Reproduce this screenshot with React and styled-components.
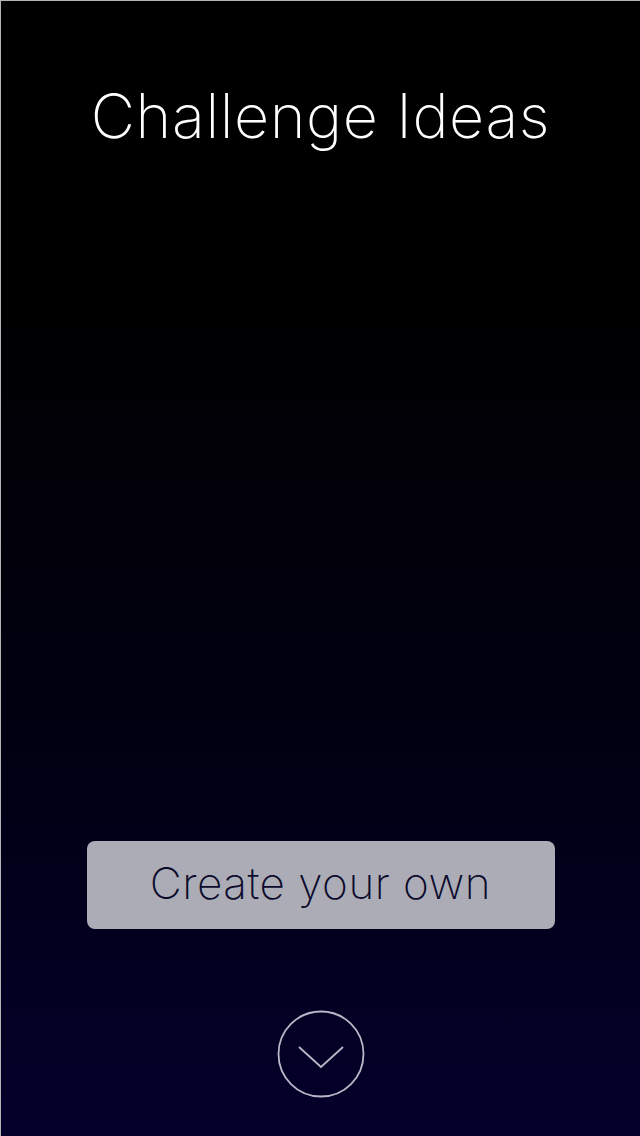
import React from "react";
import styled, { createGlobalStyle } from "styled-components";

const Global = createGlobalStyle`
  html, body {
    margin: 0;
    padding: 0;
    background: #000;
  }
`;

const Screen = styled.div`
  box-sizing: border-box;
  width: 640px;
  height: 1136px;
  border-top: solid 1px #b4b4b4;
  border-left: solid 1px #b4b4b4;
  background: linear-gradient(180deg, #000000 0%, #000000 25%, #010012 65%, #03002b 100%);
  display: flex;
  flex-direction: column;
  align-items: center;
  font-family: Inter, "Open Sans", sans-serif;
`;

const Title = styled.h1`
  margin: 77px 0 0;
  font-size: 61px;
  font-weight: 200;
  color: #ffffff;
  letter-spacing: 0.6px;
  line-height: 76px;
`;

const Spacer = styled.div`
  flex: 1;
`;

const Button = styled.button`
  width: 468px;
  height: 88px;
  border: none;
  border-radius: 8px;
  background: #abacb6;
  color: #0b0a2c;
  font-family: inherit;
  font-size: 44px;
  font-weight: 200;
  letter-spacing: 0.5px;
  display: flex;
  align-items: center;
  justify-content: center;
  padding: 0 0 4px;
`;

const Chevron = styled.div`
  margin: 81px 0 38px;
  width: 88px;
  height: 88px;
`;

export default function App() {
  return (
    <>
      <Global />
      <Screen>
        <Title>Challenge Ideas</Title>
        <Spacer />
        <Button>Create your own</Button>
        <Chevron>
          <svg width="88" height="88" viewBox="0 0 88 88" fill="none">
            <circle cx="44" cy="44" r="42.5" stroke="#b8b8c8" strokeWidth="1.8" />
            <path d="M22 37 L44 57 L66 37" stroke="#b8b8c8" strokeWidth="1.8" />
          </svg>
        </Chevron>
      </Screen>
    </>
  );
}
